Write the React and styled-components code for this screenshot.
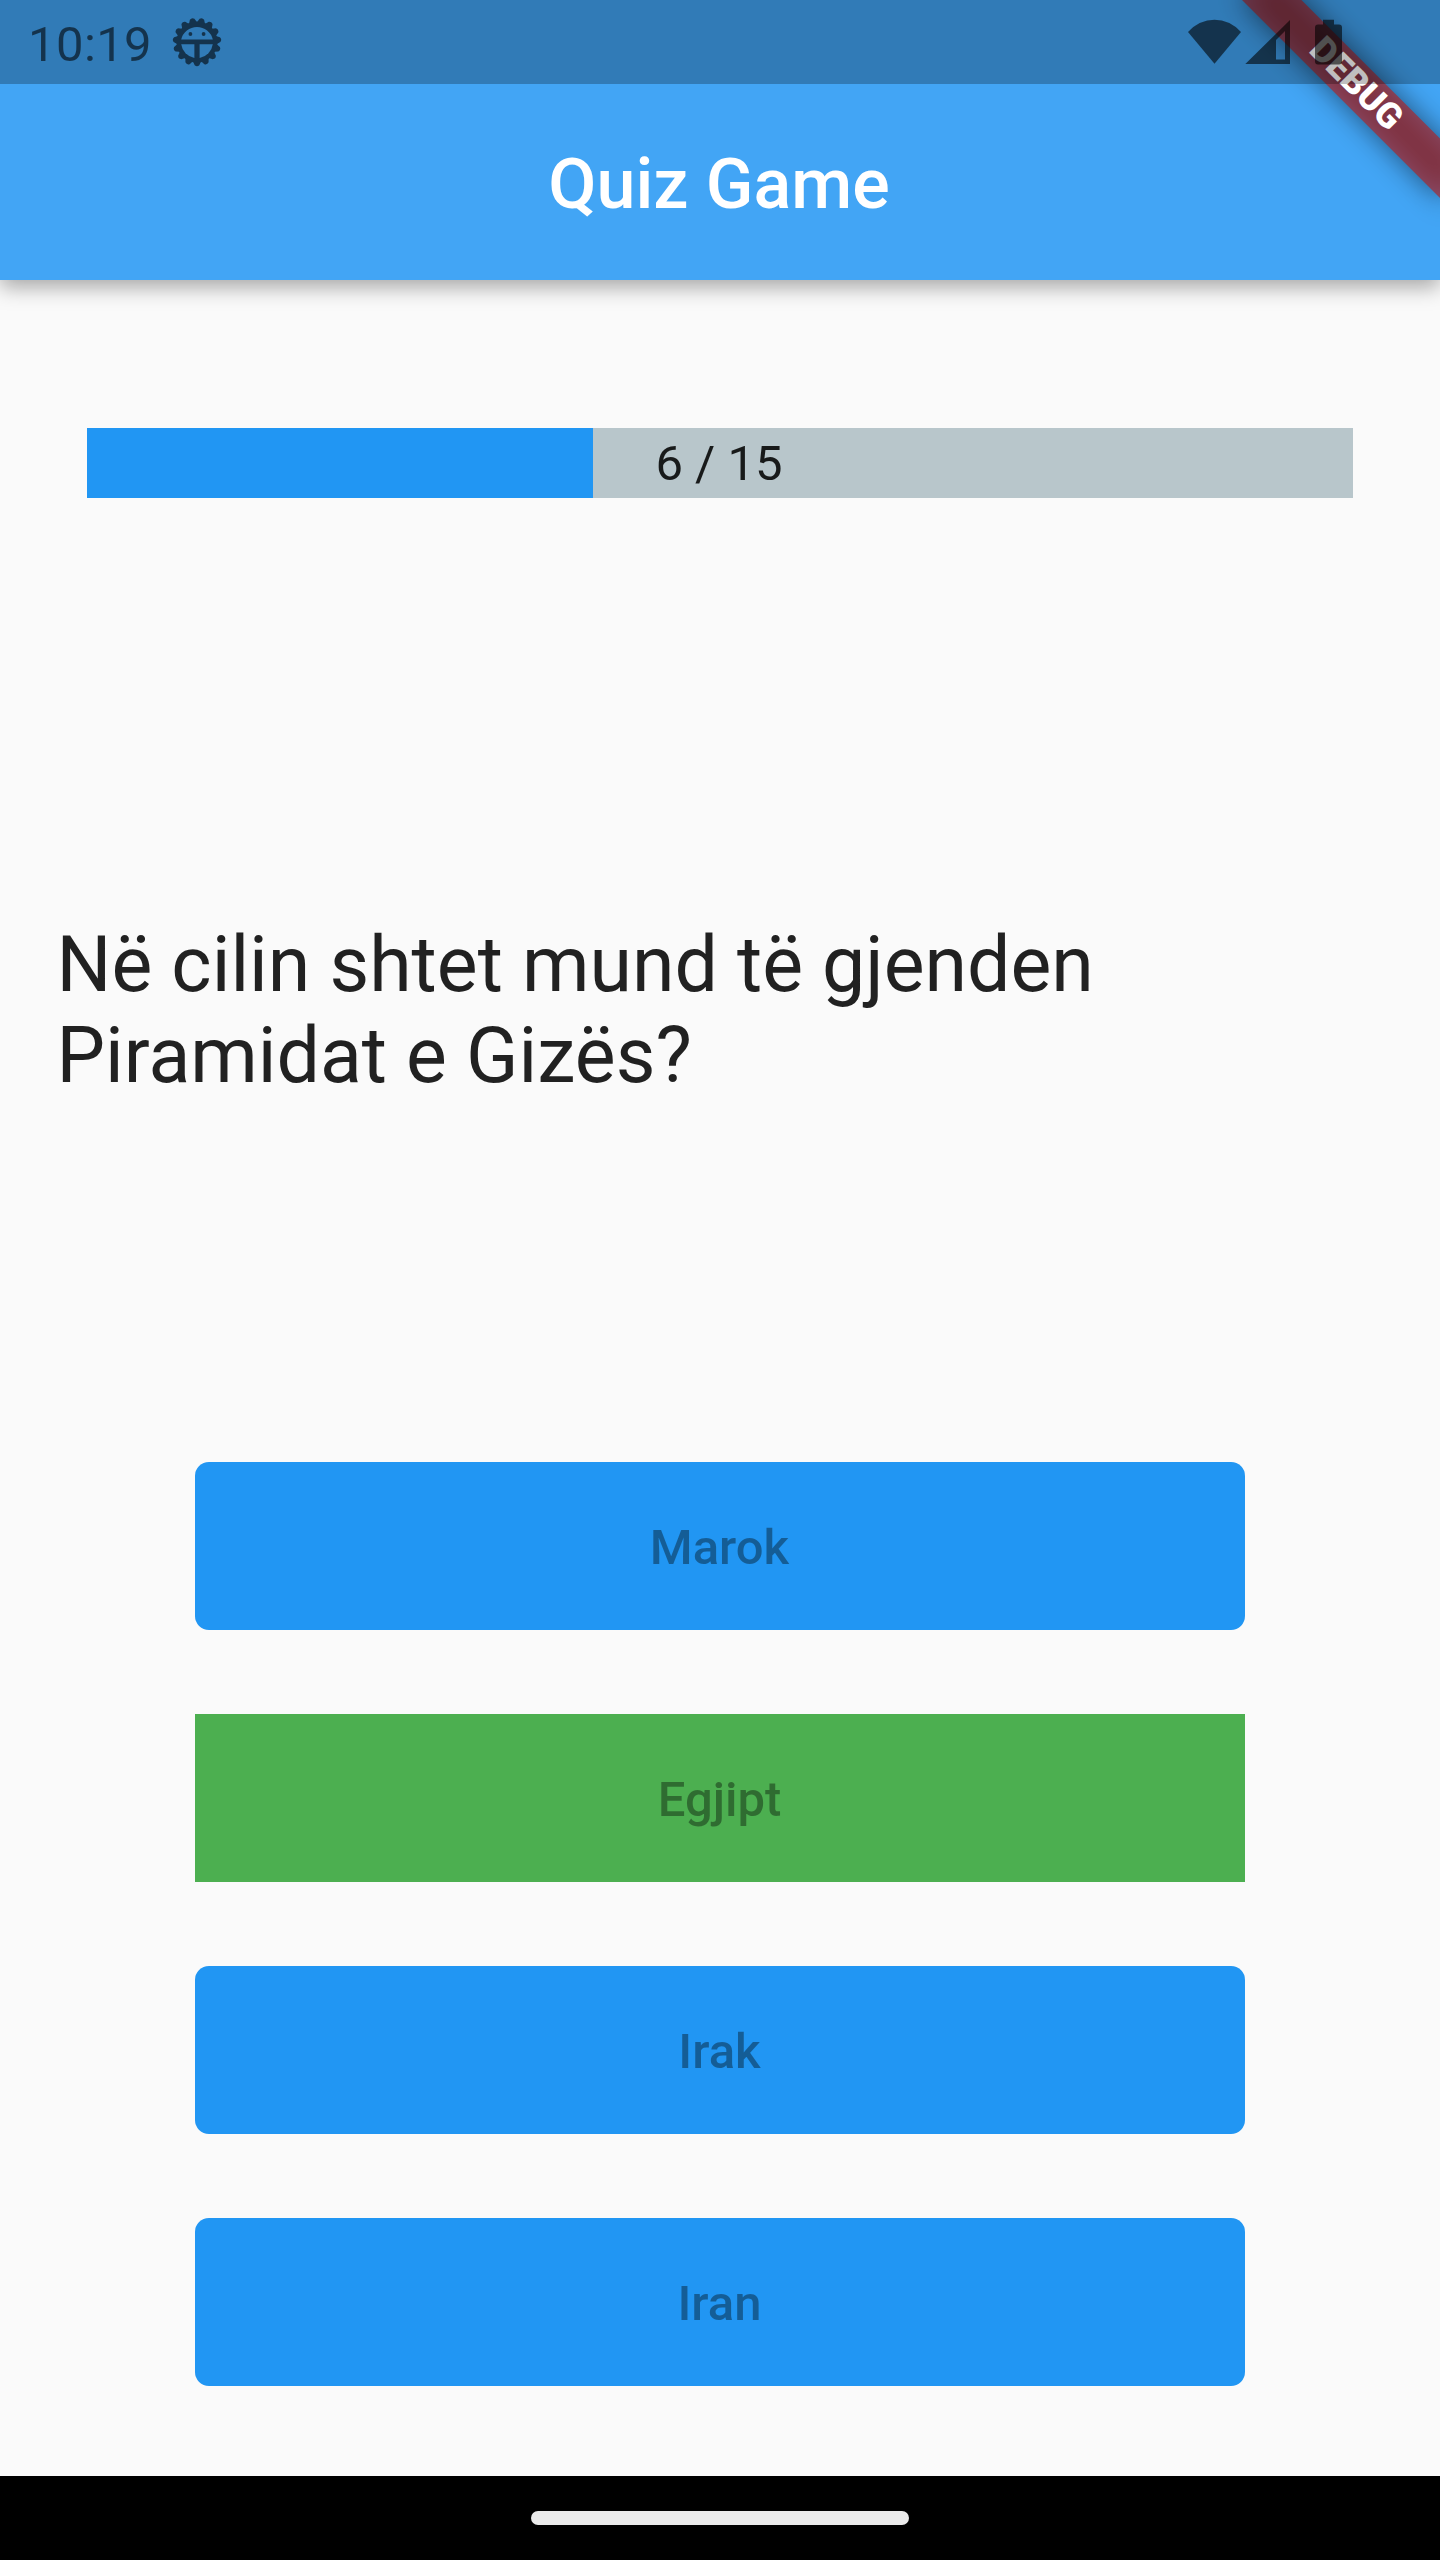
import React from "react";
import styled, { createGlobalStyle, css } from "styled-components";

const GlobalStyle = createGlobalStyle`
  *, *::before, *::after { box-sizing: border-box; }
  body { margin: 0; background: #fafafa; }
  button { font: inherit; border: 0; padding: 0; }
`;

const ICON = "rgba(0, 0, 0, 0.58)";

const Phone = styled.div`
  position: relative;
  display: flex;
  flex-direction: column;
  width: 1440px;
  height: 2560px;
  overflow: hidden;
  background: #fafafa;
  color: rgba(0, 0, 0, 0.87);
  font-family: Roboto, "Noto Sans", sans-serif;
  font-size: 49px;
`;

const AppBar = styled.header`
  flex: none;
  background: #42a5f5;
  box-shadow: 0 7px 20px rgba(0, 0, 0, 0.34);
`;

const StatusBar = styled.div`
  position: relative;
  z-index: 2;
  display: flex;
  align-items: center;
  justify-content: space-between;
  height: 84px;
  padding: 0 98px 0 28px;
  background: rgba(0, 0, 0, 0.25);
`;

const StatusGroup = styled.div`
  display: flex;
  align-items: center;
  gap: ${(p) => p.$gap}px;
`;

const Clock = styled.span`
  padding-top: 5px;
  color: ${ICON};
  letter-spacing: 0.4px;
  line-height: 57px;
`;

const Icon = styled.svg`
  display: block;
  flex: none;
  fill: ${ICON};
`;

const Toolbar = styled.div`
  display: flex;
  align-items: center;
  justify-content: center;
  height: 196px;
  padding: 4px 2px 0 0;
`;

const Title = styled.h1`
  margin: 0;
  color: #fff;
  font-size: 70px;
  font-weight: 500;
  line-height: 82px;
`;

const BannerPivot = styled.div`
  position: absolute;
  z-index: 1;
  top: 0;
  left: 100%;
  width: 0;
  height: 0;
  transform: rotate(45deg);
`;

const Banner = styled.div`
  position: absolute;
  top: 98px;
  left: -140px;
  display: flex;
  align-items: center;
  justify-content: center;
  width: 280px;
  height: 42px;
  color: #fff;
  font-size: 35.7px;
  font-weight: 900;
  line-height: 1;

  &::before {
    content: "";
    position: absolute;
    inset: 0;
    background: rgba(0, 0, 0, 0.5);
    filter: blur(13.9px);
  }

  &::after {
    content: "";
    position: absolute;
    inset: 0;
    background: rgba(183, 28, 28, 0.627);
  }
`;

const BannerText = styled.span`
  position: relative;
  z-index: 1;
`;

const Body = styled.main`
  flex: 1;
  display: flex;
  flex-direction: column;
  padding-top: 148px;
`;

const Progress = styled.div`
  display: grid;
  flex: none;
  height: 70px;
  margin: 0 87px;
  background: #b8c6cb;

  & > * { grid-area: 1 / 1; }
`;

const ProgressFill = styled.div`
  background: #2196f3;
`;

const ProgressLabel = styled.span`
  place-self: center;
  padding-right: 2px;
  line-height: 57px;
`;

const Question = styled.p`
  flex: 1;
  display: flex;
  align-items: center;
  margin: 0;
  padding: 61px 56px 0 56.5px;
  font-size: 77px;
  line-height: 91px;
`;

const Answers = styled.div`
  display: flex;
  flex: none;
  flex-direction: column;
  align-items: center;
  gap: 84px;
  padding-bottom: 90px;
`;

const Answer = styled.button`
  width: 1050px;
  height: 168px;
  padding: 2px 1px 0 0;
  border-radius: 14px;
  background: #2196f3;
  color: rgba(0, 0, 0, 0.38);
  font-weight: 500;
  line-height: 57px;

  ${(p) =>
    p.$correct &&
    css`
      border-radius: 0;
      background: #4caf50;
    `}
`;

const NavBar = styled.footer`
  display: flex;
  flex: none;
  align-items: center;
  justify-content: center;
  height: 84px;
  background: #000;
`;

const HomeHandle = styled.div`
  width: 378px;
  height: 14px;
  border-radius: 7px;
  background: #ebebeb;
`;

const TEETH = Array.from({ length: 15 }, (_, i) => {
  const a = (i * 24 * Math.PI) / 180;
  const at = (r, d) =>
    `${(25 + r * Math.sin(a + d)).toFixed(2)} ${(25 + r * Math.cos(a + d)).toFixed(2)}`;
  return `M${at(18, 0.22)}L${at(20, 0.2)}L${at(23.4, 0.1)}Q${at(25.4, 0)} ${at(23.4, -0.1)}L${at(20, -0.2)}L${at(18, -0.22)}Z`;
}).join("");

function GearIcon() {
  return (
    <Icon width="50" height="50" viewBox="0 0 50 50">
      <mask id="gear-face">
        <path d={TEETH} fill="#fff" />
        <circle cx="25" cy="25" r="20.5" fill="#fff" />
        <path d="M9.2 22.6A16.2 16.2 0 0 1 40.8 22.6Z" fill="#000" />
        <path d="M9.2 27.3H22.4V41A16.2 16.2 0 0 1 9.2 27.3Z" fill="#000" />
        <path d="M40.8 27.3H27.6V41A16.2 16.2 0 0 0 40.8 27.3Z" fill="#000" />
        <circle cx="18.4" cy="17" r="1.9" fill="#fff" />
        <circle cx="31.6" cy="17" r="1.9" fill="#fff" />
      </mask>
      <rect width="50" height="50" mask="url(#gear-face)" />
    </Icon>
  );
}

function SystemIcons() {
  return (
    <Icon width="154" height="46" viewBox="1188 18.5 154 46">
      <path d="M1188 31.4Q1199.5 19.3 1214.5 19.3T1241 31.4L1214.5 63.3Z" />
      <path
        fillRule="evenodd"
        d="M1245.3 63.5L1290 19.5V63.5ZM1276 59H1285V30.5L1276 39.5Z"
      />
      <path d="M1323 19.3H1334V24H1339Q1342 24 1342 27V61Q1342 64 1339 64H1318Q1315 64 1315 61V27Q1315 24 1318 24H1323Z" />
    </Icon>
  );
}

const quiz = {
  current: 6,
  total: 15,
  question: "Në cilin shtet mund të gjenden Piramidat e Gizës?",
  answers: ["Marok", "Egjipt", "Irak", "Iran"],
  correct: "Egjipt",
};

export default function App() {
  return (
    <>
      <GlobalStyle />
      <Phone>
        <AppBar>
          <StatusBar>
            <StatusGroup $gap={20}>
              <Clock>10:19</Clock>
              <GearIcon />
            </StatusGroup>
            <SystemIcons />
          </StatusBar>
          <Toolbar>
            <Title>Quiz Game</Title>
          </Toolbar>
        </AppBar>
        <BannerPivot>
          <Banner>
            <BannerText>DEBUG</BannerText>
          </Banner>
        </BannerPivot>
        <Body>
          <Progress>
            <ProgressFill style={{ width: `${(quiz.current / quiz.total) * 100}%` }} />
            <ProgressLabel>
              {quiz.current} / {quiz.total}
            </ProgressLabel>
          </Progress>
          <Question>{quiz.question}</Question>
          <Answers>
            {quiz.answers.map((answer) => (
              <Answer key={answer} disabled $correct={answer === quiz.correct}>
                {answer}
              </Answer>
            ))}
          </Answers>
        </Body>
        <NavBar>
          <HomeHandle />
        </NavBar>
      </Phone>
    </>
  );
}
